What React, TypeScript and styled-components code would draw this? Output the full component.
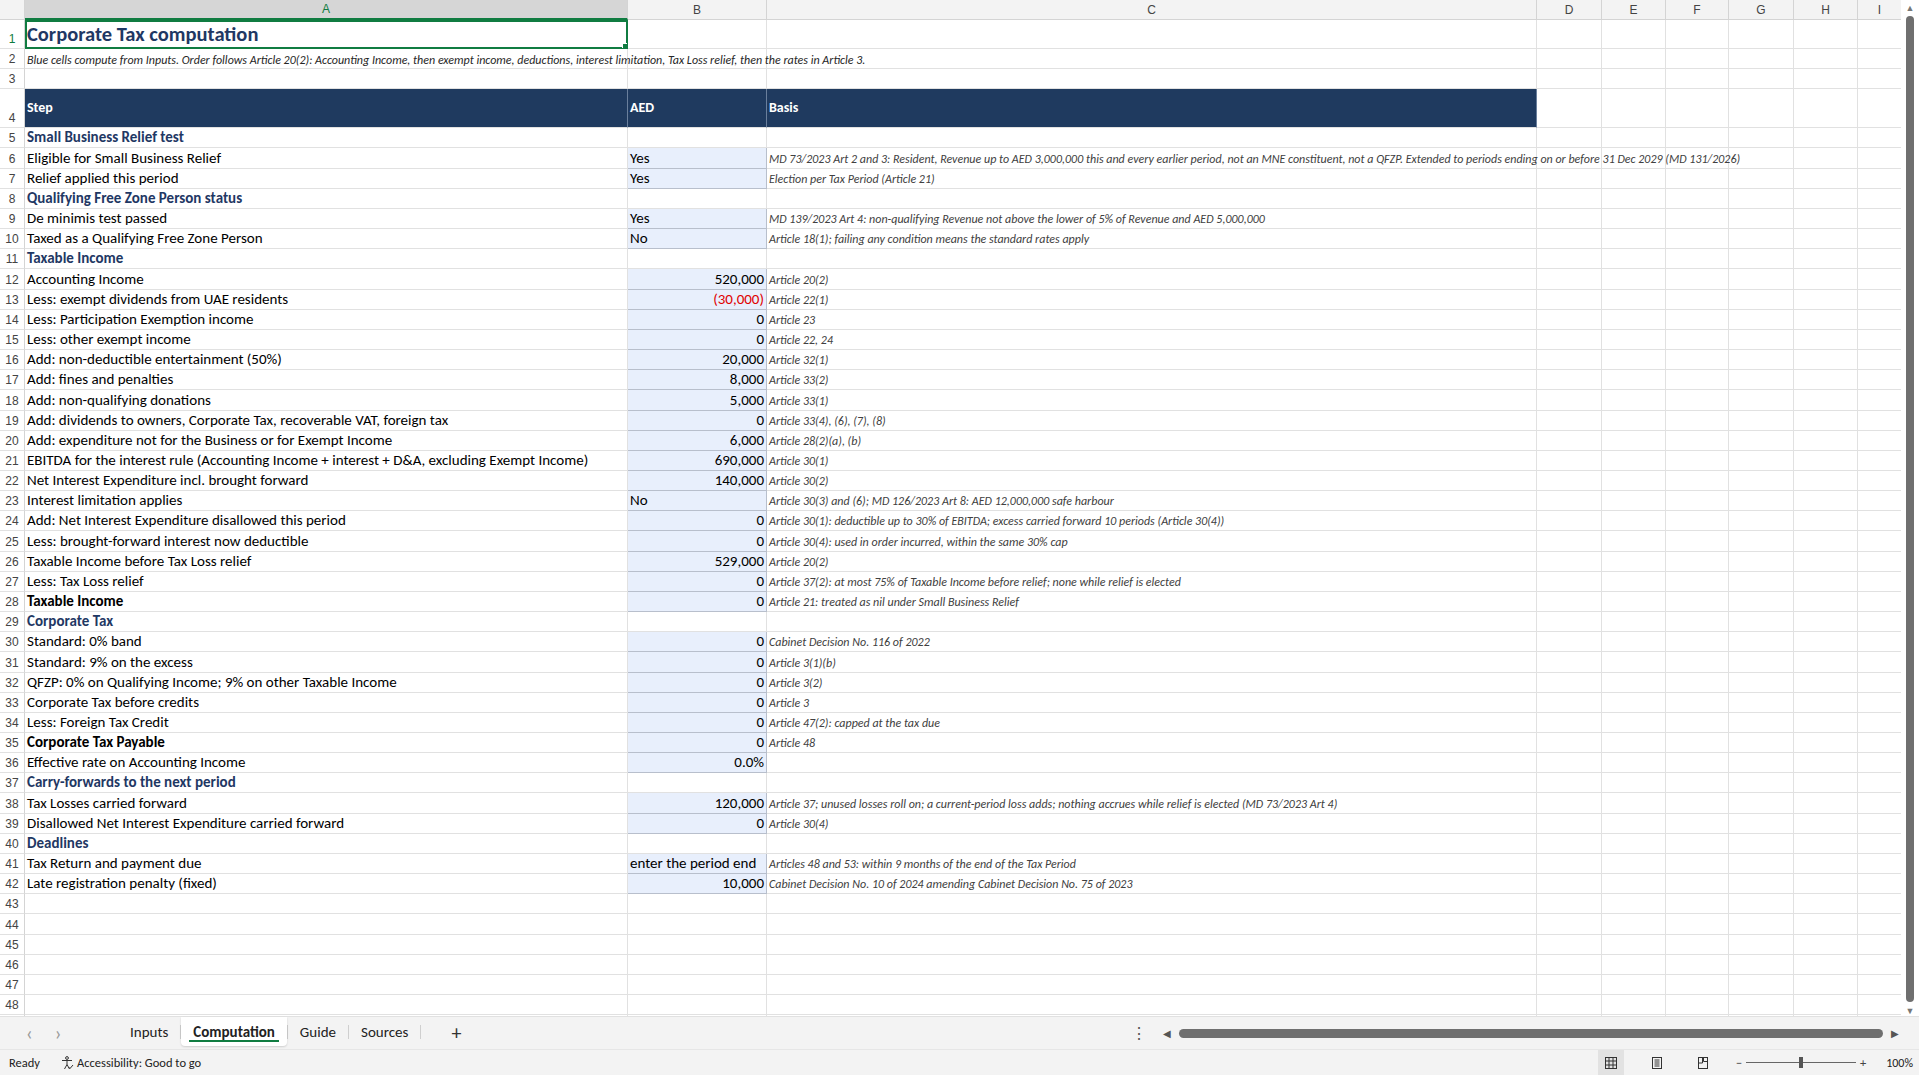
import styled, { createGlobalStyle } from 'styled-components';

const Global = createGlobalStyle`
  html, body { margin: 0; padding: 0; background: #fff; overflow: hidden; }
  body { font-family: Carlito, "Liberation Sans Narrow", "Open Sans", sans-serif; color: #000; }
`;

const COLS = '25px 603px 139px 770px 65px 64px 63px 65px 64px 44px';
const ROW_H = 20.17;

type Row = {
  a?: string;
  b?: string;
  c?: string;
  kind?: 'section' | 'bold' | 'title' | 'note' | 'head';
  num?: boolean;
  red?: boolean;
  h?: number;
};

const rows: Row[] = [
  { a: 'Corporate Tax computation', kind: 'title', h: 29 },
  { a: 'Blue cells compute from Inputs. Order follows Article 20(2): Accounting Income, then exempt income, deductions, interest limitation, Tax Loss relief, then the rates in Article 3.', kind: 'note' },
  {},
  { a: 'Step', b: 'AED', c: 'Basis', kind: 'head', h: 39 },
  { a: 'Small Business Relief test', kind: 'section' },
  { a: 'Eligible for Small Business Relief', b: 'Yes', c: 'MD 73/2023 Art 2 and 3: Resident, Revenue up to AED 3,000,000 this and every earlier period, not an MNE constituent, not a QFZP. Extended to periods ending on or before 31 Dec 2029 (MD 131/2026)' },
  { a: 'Relief applied this period', b: 'Yes', c: 'Election per Tax Period (Article 21)' },
  { a: 'Qualifying Free Zone Person status', kind: 'section' },
  { a: 'De minimis test passed', b: 'Yes', c: 'MD 139/2023 Art 4: non-qualifying Revenue not above the lower of 5% of Revenue and AED 5,000,000' },
  { a: 'Taxed as a Qualifying Free Zone Person', b: 'No', c: 'Article 18(1); failing any condition means the standard rates apply' },
  { a: 'Taxable Income', kind: 'section' },
  { a: 'Accounting Income', b: '520,000', num: true, c: 'Article 20(2)' },
  { a: 'Less: exempt dividends from UAE residents', b: '(30,000)', num: true, red: true, c: 'Article 22(1)' },
  { a: 'Less: Participation Exemption income', b: '0', num: true, c: 'Article 23' },
  { a: 'Less: other exempt income', b: '0', num: true, c: 'Article 22, 24' },
  { a: 'Add: non-deductible entertainment (50%)', b: '20,000', num: true, c: 'Article 32(1)' },
  { a: 'Add: fines and penalties', b: '8,000', num: true, c: 'Article 33(2)' },
  { a: 'Add: non-qualifying donations', b: '5,000', num: true, c: 'Article 33(1)' },
  { a: 'Add: dividends to owners, Corporate Tax, recoverable VAT, foreign tax', b: '0', num: true, c: 'Article 33(4), (6), (7), (8)' },
  { a: 'Add: expenditure not for the Business or for Exempt Income', b: '6,000', num: true, c: 'Article 28(2)(a), (b)' },
  { a: 'EBITDA for the interest rule (Accounting Income + interest + D&A, excluding Exempt Income)', b: '690,000', num: true, c: 'Article 30(1)' },
  { a: 'Net Interest Expenditure incl. brought forward', b: '140,000', num: true, c: 'Article 30(2)' },
  { a: 'Interest limitation applies', b: 'No', c: 'Article 30(3) and (6); MD 126/2023 Art 8: AED 12,000,000 safe harbour' },
  { a: 'Add: Net Interest Expenditure disallowed this period', b: '0', num: true, c: 'Article 30(1): deductible up to 30% of EBITDA; excess carried forward 10 periods (Article 30(4))' },
  { a: 'Less: brought-forward interest now deductible', b: '0', num: true, c: 'Article 30(4): used in order incurred, within the same 30% cap' },
  { a: 'Taxable Income before Tax Loss relief', b: '529,000', num: true, c: 'Article 20(2)' },
  { a: 'Less: Tax Loss relief', b: '0', num: true, c: 'Article 37(2): at most 75% of Taxable Income before relief; none while relief is elected' },
  { a: 'Taxable Income', kind: 'bold', b: '0', num: true, c: 'Article 21: treated as nil under Small Business Relief' },
  { a: 'Corporate Tax', kind: 'section' },
  { a: 'Standard: 0% band', b: '0', num: true, c: 'Cabinet Decision No. 116 of 2022' },
  { a: 'Standard: 9% on the excess', b: '0', num: true, c: 'Article 3(1)(b)' },
  { a: 'QFZP: 0% on Qualifying Income; 9% on other Taxable Income', b: '0', num: true, c: 'Article 3(2)' },
  { a: 'Corporate Tax before credits', b: '0', num: true, c: 'Article 3' },
  { a: 'Less: Foreign Tax Credit', b: '0', num: true, c: 'Article 47(2): capped at the tax due' },
  { a: 'Corporate Tax Payable', kind: 'bold', b: '0', num: true, c: 'Article 48' },
  { a: 'Effective rate on Accounting Income', b: '0.0%', num: true },
  { a: 'Carry-forwards to the next period', kind: 'section' },
  { a: 'Tax Losses carried forward', b: '120,000', num: true, c: 'Article 37; unused losses roll on; a current-period loss adds; nothing accrues while relief is elected (MD 73/2023 Art 4)' },
  { a: 'Disallowed Net Interest Expenditure carried forward', b: '0', num: true, c: 'Article 30(4)' },
  { a: 'Deadlines', kind: 'section' },
  { a: 'Tax Return and payment due', b: 'enter the period end', c: 'Articles 48 and 53: within 9 months of the end of the Tax Period' },
  { a: 'Late registration penalty (fixed)', b: '10,000', num: true, c: 'Cabinet Decision No. 10 of 2024 amending Cabinet Decision No. 75 of 2023' },
  {}, {}, {}, {}, {}, {}, {},
];

const Page = styled.div`
  width: 1919px;
  height: 1075px;
  display: flex;
  flex-direction: column;
  background: #fff;
`;

const Body = styled.div`
  flex: 1;
  display: flex;
  overflow: hidden;
`;

const Sheet = styled.div`
  flex: 1;
  overflow: hidden;
`;

const GridRow = styled.div<{ $h: number }>`
  display: grid;
  grid-template-columns: ${COLS};
  height: ${(p) => p.$h}px;
`;

const ColHead = styled.div<{ $sel?: boolean }>`
  height: 20px;
  background: ${(p) => (p.$sel ? '#d6d6d6' : '#f3f3f3')};
  color: ${(p) => (p.$sel ? '#107c41' : '#444')};
  border-right: 1px solid #d4d4d4;
  border-bottom: ${(p) => (p.$sel ? '2px solid #107c41' : '1px solid #d4d4d4')};
  box-sizing: border-box;
  font-family: "Liberation Sans", sans-serif;
  font-size: 12px;
  display: flex;
  align-items: center;
  justify-content: center;
`;

const RowHead = styled.div<{ $sel?: boolean }>`
  background: #fff;
  color: ${(p) => (p.$sel ? '#107c41' : '#444')};
  border-right: 1px solid #d4d4d4;
  border-bottom: 1px solid #e1e1e1;
  box-sizing: border-box;
  font-family: "Liberation Sans", sans-serif;
  font-size: 12px;
  display: flex;
  align-items: flex-end;
  justify-content: center;
  padding-bottom: 2px;
`;

const Cell = styled.div<{ $kind?: string; $blue?: boolean; $num?: boolean; $red?: boolean; $over?: boolean; $sel?: boolean }>`
  position: relative;
  box-sizing: border-box;
  border-right: 1px solid ${(p) => (p.$blue ? '#b8bfcc' : p.$kind === 'head' ? '#6a7f9c' : '#e1e1e1')};
  border-bottom: 1px solid ${(p) => (p.$blue ? '#b8bfcc' : '#e1e1e1')};
  background: ${(p) => (p.$kind === 'head' ? '#1f3a5f' : p.$blue ? '#e8effc' : '#fff')};
  color: ${(p) => (p.$red ? '#e00000' : p.$kind === 'head' ? '#fff' : p.$kind === 'section' || p.$kind === 'title' ? '#1f3864' : '#000')};
  font-size: ${(p) => (p.$kind === 'title' ? '20.5px' : '15px')};
  font-weight: ${(p) => (p.$kind && p.$kind !== 'note' ? 700 : 400)};
  padding: 0 2px 1px;
  display: flex;
  align-items: flex-end;
  justify-content: ${(p) => (p.$num ? 'flex-end' : 'flex-start')};
  white-space: nowrap;
  overflow: ${(p) => (p.$over ? 'visible' : 'hidden')};
  z-index: ${(p) => (p.$kind === 'note' ? 5 : p.$over ? 2 : 1)};
  ${(p) => p.$kind === 'head' && 'align-items: center; font-size: 14px;'}
  ${(p) => p.$sel && 'outline: 2px solid #107c41; outline-offset: -2px;'}
`;

const Note = styled.div`
  font-style: italic;
  font-size: 12px;
  color: #262626;
  white-space: nowrap;
`;

const Basis = styled(Note)`
  color: #404040;
  font-size: 12px;
  padding-bottom: 1px;
`;

const Handle = styled.span`
  position: absolute;
  right: -3px;
  bottom: -3px;
  width: 6px;
  height: 6px;
  background: #107c41;
  border: 1px solid #fff;
`;

const VScroll = styled.div`
  width: 18px;
  background: #fff;
  display: flex;
  flex-direction: column;
  align-items: center;
  color: #777;
  font-size: 9px;
  padding-top: 2px;
`;

const VThumb = styled.div`
  width: 8px;
  flex: 1;
  margin: 3px 0;
  background: #6f6f6f;
  border-radius: 4px;
`;

const TabBar = styled.div`
  height: 32px;
  background: #f3f3f3;
  border-top: 1px solid #e1e1e1;
  display: flex;
  align-items: stretch;
  font-size: 15px;
  color: #222;
`;

const Nav = styled.div`
  display: flex;
  align-items: center;
  gap: 22px;
  padding-left: 26px;
  width: 92px;
  color: #999;
  font-size: 20px;
`;

const Tab = styled.div<{ $active?: boolean }>`
  display: flex;
  align-items: center;
  padding: 0 12px;
  position: relative;
  background: ${(p) => (p.$active ? '#fff' : 'transparent')};
  font-weight: ${(p) => (p.$active ? 600 : 400)};
  margin-bottom: 3px;
  border-radius: 0 0 4px 4px;
  box-shadow: ${(p) => (p.$active ? '0 1px 2px rgba(0,0,0,.15)' : 'none')};
  &::after {
    content: '';
    position: absolute;
    left: 8px;
    right: 8px;
    bottom: 4px;
    height: 2px;
    background: ${(p) => (p.$active ? '#107c41' : 'transparent')};
  }
`;

const Sep = styled.div`
  width: 1px;
  margin: 8px 0 10px;
  background: #cfcfcf;
`;

const Plus = styled.div`
  display: flex;
  align-items: center;
  margin-left: 30px;
  font-size: 20px;
  color: #333;
  width: 680px;
`;

const HScroll = styled.div`
  display: flex;
  align-items: center;
  gap: 8px;
  flex: 1;
  padding-right: 20px;
  color: #555;
  font-size: 10px;
`;

const HThumb = styled.div`
  flex: 1;
  height: 9px;
  background: #6f6f6f;
  border-radius: 5px;
`;

const Status = styled.div`
  height: 25px;
  background: #f3f3f3;
  border-top: 1px solid #e6e6e6;
  display: flex;
  align-items: center;
  font-size: 12.5px;
  color: #222;
  padding-left: 9px;
`;

const StatusRight = styled.div`
  margin-left: auto;
  display: flex;
  align-items: center;
  height: 100%;
  gap: 20px;
  padding-right: 6px;
`;

const ViewBtn = styled.div<{ $on?: boolean }>`
  width: 26px;
  height: 100%;
  display: flex;
  align-items: center;
  justify-content: center;
  background: ${(p) => (p.$on ? '#e2e2e2' : 'transparent')};
`;

const Slider = styled.div`
  display: flex;
  align-items: center;
  gap: 4px;
  color: #444;
`;

const Track = styled.div`
  width: 110px;
  height: 1px;
  background: #666;
  position: relative;
`;

const Knob = styled.span`
  position: absolute;
  left: 53px;
  top: -5px;
  width: 4px;
  height: 11px;
  background: #555;
`;

const colLetters = ['A', 'B', 'C', 'D', 'E', 'F', 'G', 'H', 'I'];

export default function App() {
  return (
    <Page>
      <Global />
      <Body>
        <Sheet>
          <GridRow $h={20}>
            <ColHead />
            {colLetters.map((l) => (
              <ColHead key={l} $sel={l === 'A'}>{l}</ColHead>
            ))}
          </GridRow>
          {rows.map((r, i) => {
            const n = i + 1;
            const blue = r.b !== undefined && r.kind !== 'head';
            return (
              <GridRow key={n} $h={r.h ?? ROW_H}>
                <RowHead $sel={n === 1}>{n}</RowHead>
                <Cell $kind={r.kind} $over={r.kind === 'note'} $sel={n === 1}>
                  {r.kind === 'note' ? <Note>{r.a}</Note> : r.a}
                  {n === 1 && <Handle />}
                </Cell>
                <Cell $kind={r.kind === 'head' ? 'head' : undefined} $blue={blue} $num={r.num} $red={r.red}>
                  {r.b}
                </Cell>
                <Cell $kind={r.kind === 'head' ? 'head' : undefined} $over>
                  {r.kind === 'head' ? r.c : r.c && <Basis>{r.c}</Basis>}
                </Cell>
                {[0, 1, 2, 3, 4, 5].map((k) => (
                  <Cell key={k} />
                ))}
              </GridRow>
            );
          })}
        </Sheet>
        <VScroll>
          ▲
          <VThumb />
          ▼
        </VScroll>
      </Body>
      <TabBar>
        <Nav>
          <span>‹</span>
          <span>›</span>
        </Nav>
        <Tab>Inputs</Tab>
        <Sep />
        <Tab $active>Computation</Tab>
        <Sep />
        <Tab>Guide</Tab>
        <Sep />
        <Tab>Sources</Tab>
        <Sep />
        <Plus>+</Plus>
        <HScroll>
          <span style={{ fontSize: 16, marginRight: 8 }}>⋮</span>
          ◀
          <HThumb />
          ▶
        </HScroll>
      </TabBar>
      <Status>
        <span>Ready</span>
        <span style={{ marginLeft: 20, display: 'flex', alignItems: 'center', gap: 3 }}>
          <svg width="14" height="14" viewBox="0 0 14 14" fill="none" stroke="#333" strokeWidth="1">
            <circle cx="7" cy="2" r="1.4" />
            <path d="M2 4.5h10M7 4.5v4M4.5 13l2.5-4.5 2.5 4.5" />
            <path d="M8.5 11l1.5 1.5 3-3.5" />
          </svg>
          Accessibility: Good to go
        </span>
        <StatusRight>
          <ViewBtn $on>
            <svg width="14" height="14" viewBox="0 0 14 14" fill="none" stroke="#333" strokeWidth="1">
              <rect x="1.5" y="1.5" width="11" height="11" />
              <path d="M5 1.5v11M9 1.5v11M1.5 5h11M1.5 9h11" />
            </svg>
          </ViewBtn>
          <ViewBtn>
            <svg width="14" height="14" viewBox="0 0 14 14" fill="none" stroke="#333" strokeWidth="1">
              <rect x="2.5" y="1.5" width="9" height="11" />
              <path d="M4.5 4h5M4.5 6h5M4.5 8h5M4.5 10h5" />
            </svg>
          </ViewBtn>
          <ViewBtn>
            <svg width="14" height="14" viewBox="0 0 14 14" fill="none" stroke="#333" strokeWidth="1">
              <rect x="2.5" y="1.5" width="9" height="11" />
              <path d="M2.5 7h4V1.5M7.5 1.5v4h4" />
            </svg>
          </ViewBtn>
          <Slider>
            <span>−</span>
            <Track>
              <Knob />
            </Track>
            <span>+</span>
          </Slider>
          <span style={{ fontSize: 12 }}>100%</span>
        </StatusRight>
      </Status>
    </Page>
  );
}
